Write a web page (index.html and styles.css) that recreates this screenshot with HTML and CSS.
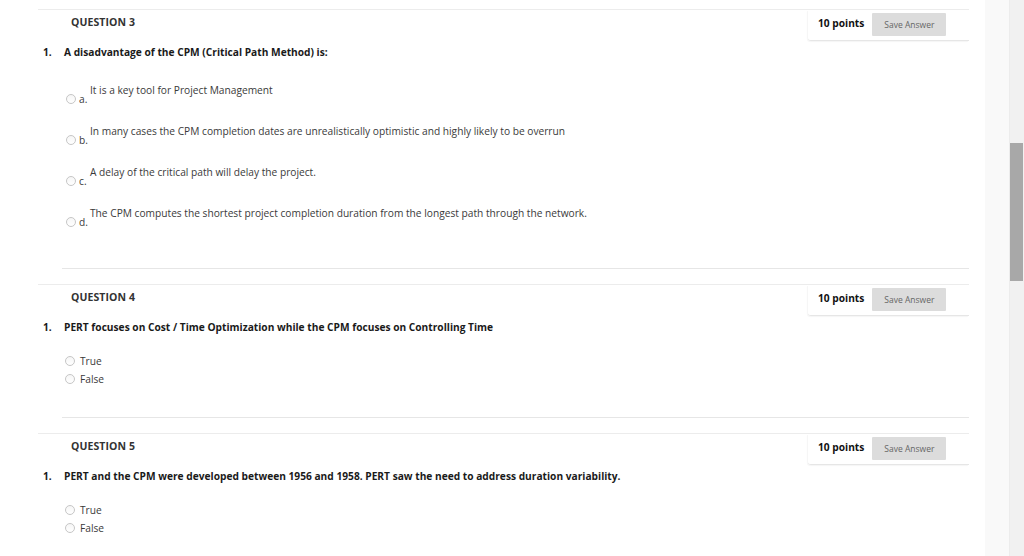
FILE: index.html
```html
<!DOCTYPE html>
<html>
<head>
<meta charset="utf-8">
<link rel="stylesheet" href="styles.css">
</head>
<body>
<div class="screen">
  <main class="content">
    <section class="question q3">
      <div class="q-header">
        <h2 class="q-title">QUESTION 3</h2>
        <div class="points-box"><span class="points">10 points</span><button class="save">Save Answer</button></div>
      </div>
      <div class="q-body">
        <p class="q-text"><span class="num">1.</span><span>A disadvantage of the CPM (Critical Path Method) is:</span></p>
        <ul class="options lettered">
          <li class="opt"><span class="mark"><span class="radio"></span><span class="letter">a.</span></span><span class="opt-text">It is a key tool for Project Management</span></li>
          <li class="opt"><span class="mark"><span class="radio"></span><span class="letter">b.</span></span><span class="opt-text">In many cases the CPM completion dates are unrealistically optimistic and highly likely to be overrun</span></li>
          <li class="opt"><span class="mark"><span class="radio"></span><span class="letter">c.</span></span><span class="opt-text">A delay of the critical path will delay the project.</span></li>
          <li class="opt"><span class="mark"><span class="radio"></span><span class="letter">d.</span></span><span class="opt-text">The CPM computes the shortest project completion duration from the longest path through the network.</span></li>
        </ul>
      </div>
      <hr class="divider">
    </section>

    <section class="question q4">
      <div class="q-header">
        <h2 class="q-title">QUESTION 4</h2>
        <div class="points-box"><span class="points">10 points</span><button class="save">Save Answer</button></div>
      </div>
      <div class="q-body">
        <p class="q-text"><span class="num">1.</span><span>PERT focuses on Cost / Time Optimization while the CPM focuses on Controlling Time</span></p>
        <ul class="options tf">
          <li class="opt"><span class="radio"></span><span class="opt-text">True</span></li>
          <li class="opt"><span class="radio"></span><span class="opt-text">False</span></li>
        </ul>
      </div>
      <hr class="divider">
    </section>

    <section class="question q5">
      <div class="q-header">
        <h2 class="q-title">QUESTION 5</h2>
        <div class="points-box"><span class="points">10 points</span><button class="save">Save Answer</button></div>
      </div>
      <div class="q-body">
        <p class="q-text"><span class="num">1.</span><span>PERT and the CPM were developed between 1956 and 1958. PERT saw the need to address duration variability.</span></p>
        <ul class="options tf">
          <li class="opt"><span class="radio"></span><span class="opt-text">True</span></li>
          <li class="opt"><span class="radio"></span><span class="opt-text">False</span></li>
        </ul>
      </div>
    </section>
  </main>
  <div class="gutter"></div>
  <div class="scrollbar"><div class="thumb"></div></div>
</div>
</body>
</html>
```

FILE: styles.css
```css
* { box-sizing: border-box; }
html, body { margin: 0; padding: 0; }
body {
  font-family: "Open Sans", "DejaVu Sans", sans-serif;
  color: #333;
  background: #fff;
}
.screen {
  display: flex;
  width: 1024px;
  height: 556px;
  overflow: hidden;
}
.content {
  width: 985px;
  flex: none;
  background: #fff;
  padding-top: 9px;
}
.gutter {
  width: 24px;
  flex: none;
  background: #f9f9f9;
}
.scrollbar {
  width: 15px;
  flex: none;
  background: #f1f1f1;
  border-left: 1px solid #ececec;
}
.thumb {
  margin-top: 143px;
  height: 138px;
  width: 13px;
  background: #a8a8a8;
}

.q-header {
  margin-left: 38px;
  width: 931px;
  height: 32px;
  border-top: 1px solid #ececec;
  display: flex;
  justify-content: space-between;
  align-items: flex-start;
}
.q-title {
  margin: 5px 0 0 33px;
  font-size: 10.5px;
  line-height: 14px;
  font-weight: 700;
  color: #333;
  letter-spacing: 0.1px;
}
.points-box {
  width: 161px;
  height: 31px;
  display: flex;
  align-items: flex-start;
  padding-left: 10px;
  border-bottom: 1px solid #e6e6e6;
  border-bottom-left-radius: 3px;
  box-shadow: -1px 1px 1px rgba(0,0,0,0.04);
}
.points {
  margin-top: 6px;
  font-size: 10.2px;
  line-height: 14px;
  font-weight: 700;
  color: #111;
}
.save {
  margin: 3px 0 0 8px;
  width: 74px;
  height: 23px;
  padding: 0;
  border: none;
  border-radius: 1px;
  background: #dcdcdc;
  font-family: "Open Sans", "DejaVu Sans", sans-serif;
  font-size: 8.5px;
  color: #666;
}

.q-body { margin-left: 43px; }
.q-text {
  margin: 4px 0 0;
  display: flex;
  font-size: 10.2px;
  line-height: 14px;
  font-weight: 700;
  color: #1a1a1a;
}
.num { width: 21px; flex: none; }

.options {
  list-style: none;
  margin: 0;
  padding: 0;
  font-size: 10.2px;
  line-height: 14px;
  color: #3a3a3a;
}
.radio {
  display: inline-block;
  width: 10px;
  height: 10px;
  border: 1px solid #c6c6c6;
  border-radius: 50%;
  background: linear-gradient(#f6f6f6, #fff);
  flex: none;
}

.lettered { margin: 24px 0 0 23px; }
.lettered .opt {
  display: flex;
  align-items: flex-start;
  height: 41px;
}
.lettered .mark {
  display: flex;
  align-items: center;
  margin-top: 9px;
}
.letter { margin-left: 3px; width: 11px; }

.tf { margin: 18px 0 0 22px; }
.tf .opt {
  display: flex;
  align-items: center;
  height: 18px;
}
.tf .opt-text { margin-left: 5px; }

.divider {
  border: none;
  border-top: 1px solid #e6e6e6;
  margin: 0 16px 0 62px;
}
.q3 .divider { margin-top: 21px; margin-bottom: 15px; }
.q4 .divider { margin-top: 29px; margin-bottom: 15px; }
```
